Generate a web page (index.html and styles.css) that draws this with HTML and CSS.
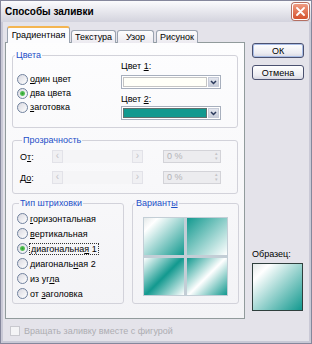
FILE: index.html
```html
<!DOCTYPE html>
<html lang="ru">
<head>
    <meta charset="UTF-8">
    <title>Способы заливки</title>
    <link rel="stylesheet" href="styles.css">
</head>
<body>

<div class="window">
    <div class="titlebar">
        <span class="title">Способы заливки</span>
        <span class="close">
            <svg width="9" height="9" viewBox="0 0 9 9"><path d="M1 1 L8 8 M8 1 L1 8" stroke="#fff" stroke-width="1.8" stroke-linecap="round"/></svg>
        </span>
    </div>

    <div class="client">
        <div class="main">
            <div class="left">
                <div class="tabs">
                    <span class="tab active">Градиентная</span>
                    <span class="tab">Текстура</span>
                    <span class="tab">Узор</span>
                    <span class="tab">Рисунок</span>
                </div>

                <div class="panel">
                    <!-- Цвета -->
                    <fieldset class="group colors">
                        <legend>Цвета</legend>
                        <div class="color-body">
                            <div class="radios">
                                <div class="radio"><span class="dot"></span><span><u>о</u>дин цвет</span></div>
                                <div class="radio"><span class="dot on"></span><span><u>д</u>ва цвета</span></div>
                                <div class="radio"><span class="dot"></span><span><u>з</u>аготовка</span></div>
                            </div>
                            <div class="picks">
                                <div class="pick-label">Цвет <u>1</u>:</div>
                                <div class="combo">
                                    <span class="swatch"></span>
                                    <span class="arrow"><svg width="7" height="5" viewBox="0 0 7 5"><path d="M1 1 L3.5 3.5 L6 1" fill="none" stroke="#2b3a5c" stroke-width="1.5"/></svg></span>
                                </div>
                                <div class="pick-label second">Цвет <u>2</u>:</div>
                                <div class="combo teal-combo">
                                    <span class="swatch teal"></span>
                                    <span class="arrow"><svg width="7" height="5" viewBox="0 0 7 5"><path d="M1 1 L3.5 3.5 L6 1" fill="none" stroke="#2b3a5c" stroke-width="1.5"/></svg></span>
                                </div>
                            </div>
                        </div>
                    </fieldset>

                    <!-- Прозрачность -->
                    <fieldset class="group transp">
                        <legend>Прозрачность</legend>
                        <div class="t-row">
                            <span class="t-label">О<u>т</u>:</span>
                            <span class="slider"><span class="sbtn">&lsaquo;</span><span class="track"></span><span class="sbtn">&rsaquo;</span></span>
                            <span class="spin"><span>0 %</span><span class="spin-arrows">▴<br>▾</span></span>
                        </div>
                        <div class="t-row">
                            <span class="t-label">Д<u>о</u>:</span>
                            <span class="slider"><span class="sbtn">&lsaquo;</span><span class="track"></span><span class="sbtn">&rsaquo;</span></span>
                            <span class="spin"><span>0 %</span><span class="spin-arrows">▴<br>▾</span></span>
                        </div>
                    </fieldset>

                    <div class="bottom-row">
                        <!-- Тип штриховки -->
                        <fieldset class="group shading">
                            <legend>Тип штриховки</legend>
                            <div class="radio"><span class="dot"></span><span><u>г</u>оризонтальная</span></div>
                            <div class="radio"><span class="dot"></span><span><u>в</u>ертикальная</span></div>
                            <div class="radio"><span class="dot on"></span><span class="focus">диагональна<u>я</u> 1</span></div>
                            <div class="radio"><span class="dot"></span><span>диагональ<u>н</u>ая 2</span></div>
                            <div class="radio"><span class="dot"></span><span>из уг<u>л</u>а</span></div>
                            <div class="radio"><span class="dot"></span><span>от <u>з</u>аголовка</span></div>
                        </fieldset>

                        <!-- Варианты -->
                        <fieldset class="group variants">
                            <legend>Вариант<u>ы</u></legend>
                            <div class="grid">
                                <span class="var v1"></span>
                                <span class="var v2"></span>
                                <span class="var v3"></span>
                                <span class="var v4"></span>
                            </div>
                        </fieldset>
                    </div>
                </div>
            </div>

            <div class="side">
                <button class="btn default">ОК</button>
                <button class="btn">Отмена</button>
                <div class="sample-label">Образец:</div>
                <div class="sample"></div>
            </div>
        </div>

        <div class="rotate">
            <span class="check"></span>
            <span>Вращать заливку вместе с фигурой</span>
        </div>
    </div>
</div>

</body>
</html>
```

FILE: styles.css
```css
* {
    box-sizing: border-box;
}

body {
    margin: 0;
    font-family: "Liberation Sans", Arial, sans-serif;
    font-size: 9px;
    color: #000;
    background: #fff;
}

/* Window frame */
.window {
    width: 312px;
    height: 344px;
    border: 1px solid #85879c;
    background: #c9c9d6;
    display: flex;
    flex-direction: column;
}

.titlebar {
    height: 21px;
    flex: none;
    display: flex;
    align-items: center;
    justify-content: space-between;
    padding: 0 2px 0 4px;
    background: linear-gradient(#fbfbfd, #e9e9ef 45%, #d3d3dd);
}

.title {
    font-weight: bold;
    font-size: 10px;
}

.close {
    width: 17px;
    height: 17px;
    border: 1px solid #fff;
    border-radius: 3px;
    background: linear-gradient(#ef9c82, #d5532f);
    box-shadow: 0 0 0 1px #b46f62;
    display: flex;
    align-items: center;
    justify-content: center;
}

.client {
    flex: 1;
    margin: 0 2px 2px;
    background: #e4e3ea;
    display: flex;
    flex-direction: column;
}

.main {
    display: flex;
    padding: 4px 0 0 2px;
}

/* Tabs */
.left {
    width: 240px;
}

.tabs {
    display: flex;
    align-items: flex-end;
    height: 17px;
    padding-left: 2px;
    margin-bottom: -1px;
}

.tab {
    height: 13px;
    margin-left: 1px;
    border: 1px solid #9aa3b0;
    border-bottom: none;
    border-radius: 3px 3px 0 0;
    background: linear-gradient(#fdfdfd, #eceaf0);
    text-align: center;
    line-height: 12px;
}

.tab:nth-child(2) { width: 45px; }
.tab:nth-child(3) { width: 37px; }
.tab:nth-child(4) { width: 42px; margin-left: 2px; }

.tab.active {
    width: 63px;
    height: 17px;
    margin-left: 0;
    border-top: 2px solid #f4b551;
    background: #fcfcfe;
    line-height: 14px;
    position: relative;
}

.panel {
    height: 277px;
    border: 1px solid #919b9c;
    background: linear-gradient(#fdfdfe, #f3f3f6);
    padding: 7px 0 0 6px;
}

/* Group boxes */
.group {
    margin: 0;
    padding: 0;
    min-width: 0;
    border: 1px solid #d2d2da;
    border-radius: 3px;
}

.group legend {
    padding: 0 1px;
    margin-left: 2px;
    color: #1d4fc8;
    line-height: 11px;
}

.colors {
    width: 226px;
    height: 78px;
}

.color-body {
    display: flex;
}

.radios {
    width: 108px;
    padding: 11px 0 0 4px;
}

.radio {
    display: flex;
    align-items: center;
    height: 14px;
}

.dot {
    width: 11px;
    height: 11px;
    margin-right: 2px;
    border: 1px solid #71829e;
    border-radius: 50%;
    background: linear-gradient(135deg, #d8d8e0, #fff);
    flex: none;
}

.dot.on {
    background: radial-gradient(circle, #2c9c2c 0, #5cc45c 2px, transparent 3px),
                linear-gradient(135deg, #d8d8e0, #fff);
}

.picks {
    width: 100px;
}

.pick-label {
    height: 10px;
    line-height: 10px;
}

.pick-label.second {
    margin-top: 5px;
}

.combo {
    display: flex;
    height: 14px;
    margin-top: 4px;
    border: 1px solid #a7afbd;
    background: #fff;
    padding: 1px;
}

.teal-combo {
    margin-top: 2px;
}

.swatch {
    flex: 1;
    border: 1px solid #c4c4c4;
    background: #fffff8;
}

.swatch.teal {
    border-color: #5f6f6d;
    background: #12998f;
}

.arrow {
    width: 11px;
    margin-left: 1px;
    border: 1px solid #c6cbd8;
    background: linear-gradient(#e3e6ee, #c8cdd9);
    display: flex;
    align-items: center;
    justify-content: center;
}

/* Прозрачность */
.transp {
    width: 226px;
    height: 59px;
    margin-top: 7px;
    padding: 4px 0 0 7px;
}

.t-row {
    display: flex;
    align-items: center;
    height: 13px;
    margin-bottom: 8px;
}

.t-label {
    width: 32px;
}

.slider {
    display: flex;
    width: 91px;
    height: 13px;
    background: #f5f5f7;
}

.sbtn {
    width: 11px;
    border: 1px solid #e2e2e8;
    background: #f0f0f3;
    color: #c3c3c8;
    text-align: center;
    line-height: 10px;
    font-size: 10px;
}

.track {
    flex: 1;
}

.spin {
    display: flex;
    justify-content: space-between;
    width: 58px;
    height: 13px;
    margin-left: 20px;
    padding-left: 3px;
    border: 1px solid #d3d3d8;
    background: #ececef;
    color: #b2b2b6;
    line-height: 11px;
}

.spin-arrows {
    width: 8px;
    font-size: 5px;
    line-height: 5px;
    text-align: center;
    color: #c4c4c8;
}

/* Нижний ряд */
.bottom-row {
    display: flex;
    gap: 8px;
    margin-top: 4px;
}

.shading {
    width: 112px;
    height: 106px;
    padding: 2px 0 0 4px;
}

.shading .radio {
    height: 15px;
}

.focus {
    outline: 1px dotted #333;
    padding: 0 1px;
}

.variants {
    width: 107px;
    height: 106px;
    padding-top: 8px;
}

.grid {
    display: grid;
    grid-template-columns: 40px 40px;
    grid-template-rows: 37px 37px;
    gap: 3px;
    width: 85px;
    margin: 0 auto;
    padding: 1px;
    background: #c3ced6;
}

.var {
    display: block;
}

.v1 { background: linear-gradient(135deg, #e4eaea, #fff 18%, #12998f); }
.v2 { background: linear-gradient(135deg, #12998f, #fff); }
.v3 { background: linear-gradient(135deg, #fff, #12998f 50%, #fff); }
.v4 { background: linear-gradient(135deg, #12998f, #fff 50%, #12998f); }

/* Кнопки и образец */
.side {
    width: 52px;
    margin-left: 7px;
    padding-top: 17px;
    display: flex;
    flex-direction: column;
}

.btn {
    height: 15px;
    padding: 0;
    border: 1px solid #4b5170;
    border-radius: 3px;
    background: linear-gradient(#fff, #ececf2 70%, #d8d8e2);
    font-family: inherit;
    font-size: 9px;
    color: #000;
}

.btn.default {
    box-shadow: inset 0 0 0 1px #a9bde6;
}

.btn + .btn {
    margin-top: 7px;
}

.sample-label {
    margin-top: 169px;
    height: 10px;
    line-height: 10px;
}

.sample {
    width: 51px;
    height: 48px;
    margin-top: 4px;
    border: 1px solid #2f3f3d;
    background: linear-gradient(135deg, #e4eaea, #fff 18%, #12998f);
}

/* Флажок */
.rotate {
    display: flex;
    align-items: center;
    height: 12px;
    margin-top: 6px;
    padding-left: 7px;
    color: #adadb2;
}

.check {
    width: 10px;
    height: 10px;
    margin-right: 4px;
    border: 1px solid #c9c9cf;
    background: #f4f4f6;
}
```
